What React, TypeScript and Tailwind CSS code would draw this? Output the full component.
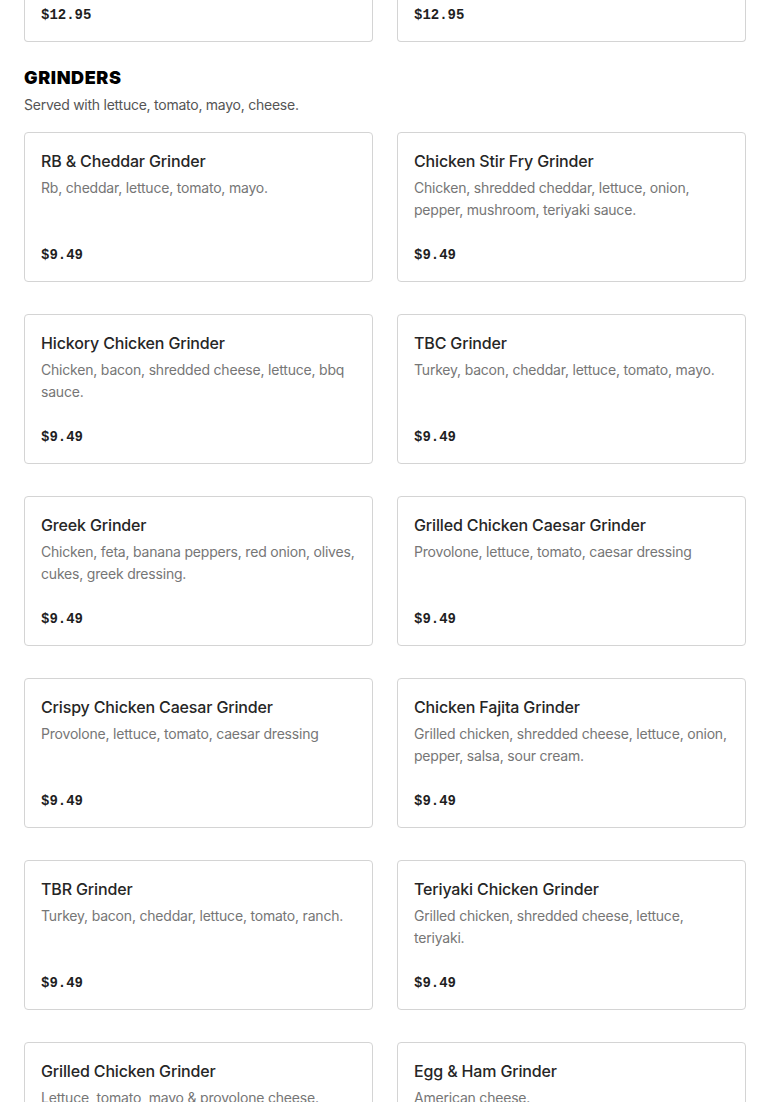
const items = [
  { name: 'RB & Cheddar Grinder', desc: 'Rb, cheddar, lettuce, tomato, mayo.', price: '$9.49' },
  { name: 'Chicken Stir Fry Grinder', desc: 'Chicken, shredded cheddar, lettuce, onion, pepper, mushroom, teriyaki sauce.', price: '$9.49' },
  { name: 'Hickory Chicken Grinder', desc: 'Chicken, bacon, shredded cheese, lettuce, bbq sauce.', price: '$9.49' },
  { name: 'TBC Grinder', desc: 'Turkey, bacon, cheddar, lettuce, tomato, mayo.', price: '$9.49' },
  { name: 'Greek Grinder', desc: 'Chicken, feta, banana peppers, red onion, olives, cukes, greek dressing.', price: '$9.49' },
  { name: 'Grilled Chicken Caesar Grinder', desc: 'Provolone, lettuce, tomato, caesar dressing', price: '$9.49' },
  { name: 'Crispy Chicken Caesar Grinder', desc: 'Provolone, lettuce, tomato, caesar dressing', price: '$9.49' },
  { name: 'Chicken Fajita Grinder', desc: 'Grilled chicken, shredded cheese, lettuce, onion, pepper, salsa, sour cream.', price: '$9.49' },
  { name: 'TBR Grinder', desc: 'Turkey, bacon, cheddar, lettuce, tomato, ranch.', price: '$9.49' },
  { name: 'Teriyaki Chicken Grinder', desc: 'Grilled chicken, shredded cheese, lettuce, teriyaki.', price: '$9.49' },
  { name: 'Grilled Chicken Grinder', desc: 'Lettuce, tomato, mayo & provolone cheese.', price: '$9.49' },
  { name: 'Egg & Ham Grinder', desc: 'American cheese.', price: '$9.49' },
];

const sans = "font-['Inter','Liberation_Sans',sans-serif]";
const mono = "font-['Liberation_Mono','DejaVu_Sans_Mono',monospace]";

function MenuCard({ name, desc, price }: { name: string; desc: string; price: string }) {
  return (
    <div className="h-[150px] border border-[#d4d4d4] rounded-[4px] bg-white px-4 pt-4 pb-[14px] flex flex-col">
      <h3 className="text-[16px] leading-6 font-medium text-[#262626] tracking-[-0.15px]">{name}</h3>
      <p className="mt-1 text-[14px] leading-[22px] text-[#767676] tracking-[-0.2px]">{desc}</p>
      <span className={`mt-auto text-[14px] leading-6 font-bold text-[#1f1f1f] ${mono}`}>{price}</span>
    </div>
  );
}

export default function App() {
  return (
    <div className={`bg-white min-h-screen px-6 ${sans}`}>
      {/* tail of previous section */}
      <div className="grid grid-cols-2 gap-6">
        {[0, 1].map(i => (
          <div key={i} className="h-[42px] border border-t-0 border-[#d4d4d4] rounded-b-[4px] px-4 pb-[14px] flex flex-col justify-end">
            <span className={`text-[14px] leading-6 font-bold text-[#1f1f1f] ${mono}`}>$12.95</span>
          </div>
        ))}
      </div>

      <section className="pt-6">
        <h2 className="text-[18px] leading-6 font-black text-black tracking-[0.6px]">GRINDERS</h2>
        <p className="mt-[5px] text-[14px] leading-5 text-[#555] tracking-[-0.25px]">Served with lettuce, tomato, mayo, cheese.</p>
        <div className="mt-[17px] grid grid-cols-2 gap-x-6 gap-y-8">
          {items.map(item => (
            <MenuCard key={item.name} {...item} />
          ))}
        </div>
      </section>
    </div>
  );
}
